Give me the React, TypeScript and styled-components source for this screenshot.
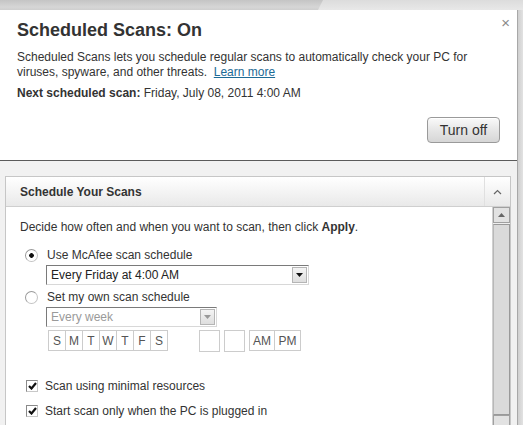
import * as React from 'react';
import styled, { createGlobalStyle } from 'styled-components';

const GlobalStyle = createGlobalStyle`
    html, body {
        margin: 0;
        padding: 0;
        background: #e4e4e4;
    }
    body {
        font-family: 'Liberation Sans', Arial, sans-serif;
        color: #333;
    }
`;

const DAYS = ['S', 'M', 'T', 'W', 'T', 'F', 'S'];

const App = () => {
    const [mode, setMode] = React.useState<'mcafee' | 'own'>('mcafee');
    const [minimal, setMinimal] = React.useState(true);
    const [pluggedIn, setPluggedIn] = React.useState(true);

    return (
        <>
            <GlobalStyle />
            <Page>
                <TopStrip>
                    <TopShade />
                </TopStrip>
                <Body>
                    <Card>
                        <Summary>
                            <Close>×</Close>
                            <Title>Scheduled Scans: On</Title>
                            <Desc>
                                Scheduled Scans lets you schedule regular scans to automatically check your PC for
                                viruses, spyware, and other threats.&nbsp; <LinkText>Learn more</LinkText>
                            </Desc>
                            <NextScan>
                                <b>Next scheduled scan:</b> Friday, July 08, 2011 4:00 AM
                            </NextScan>
                            <ButtonRow>
                                <Button>Turn off</Button>
                            </ButtonRow>
                        </Summary>

                        <Lower>
                            <Panel>
                                <Panel.Header>
                                    <Panel.Title>Schedule Your Scans</Panel.Title>
                                    <Panel.Toggle>
                                        <svg width="9" height="6" viewBox="0 0 9 6">
                                            <path d="M1 5 L4.5 1.5 L8 5" fill="none" stroke="#666" strokeWidth="1.2" />
                                        </svg>
                                    </Panel.Toggle>
                                </Panel.Header>
                                <Panel.Body>
                                    <Content>
                                        <Intro>
                                            Decide how often and when you want to scan, then click <b>Apply</b>.
                                        </Intro>

                                        <OptionRow $top={12} onClick={() => setMode('mcafee')}>
                                            <Radio $checked={mode === 'mcafee'} />
                                            <span>Use McAfee scan schedule</span>
                                        </OptionRow>
                                        <Select $width={263}>
                                            <Select.Value>Every Friday at 4:00 AM</Select.Value>
                                            <Select.Arrow>
                                                <svg width="7" height="4" viewBox="0 0 7 4">
                                                    <path d="M0 0 H7 L3.5 4 Z" fill="#111" />
                                                </svg>
                                            </Select.Arrow>
                                        </Select>

                                        <OptionRow $top={4} onClick={() => setMode('own')}>
                                            <Radio $checked={mode === 'own'} />
                                            <span>Set my own scan schedule</span>
                                        </OptionRow>
                                        <Select $width={171} $disabled>
                                            <Select.Value>Every week</Select.Value>
                                            <Select.Arrow>
                                                <svg width="7" height="4" viewBox="0 0 7 4">
                                                    <path d="M0 0 H7 L3.5 4 Z" fill="#999" />
                                                </svg>
                                            </Select.Arrow>
                                        </Select>

                                        <TimeRow>
                                            <Group>
                                                {DAYS.map((d, i) => (
                                                    <Cell key={i} $width={17}>
                                                        {d}
                                                    </Cell>
                                                ))}
                                            </Group>
                                            <TimeInputs>
                                                <TimeBox />
                                                <TimeBox />
                                            </TimeInputs>
                                            <Group>
                                                <Cell $width={25}>AM</Cell>
                                                <Cell $width={26}>PM</Cell>
                                            </Group>
                                        </TimeRow>

                                        <CheckRow $top={26} onClick={() => setMinimal(!minimal)}>
                                            <CheckBox>{minimal && <CheckMark />}</CheckBox>
                                            <span>Scan using minimal resources</span>
                                        </CheckRow>
                                        <CheckRow $top={9} onClick={() => setPluggedIn(!pluggedIn)}>
                                            <CheckBox>{pluggedIn && <CheckMark />}</CheckBox>
                                            <span>Start scan only when the PC is plugged in</span>
                                        </CheckRow>
                                    </Content>

                                    <Scrollbar>
                                        <Scrollbar.Button>
                                            <svg width="7" height="4" viewBox="0 0 7 4">
                                                <path d="M0 4 H7 L3.5 0 Z" fill="#666" />
                                            </svg>
                                        </Scrollbar.Button>
                                        <Scrollbar.Thumb />
                                        <Scrollbar.Button />
                                    </Scrollbar>
                                </Panel.Body>
                            </Panel>
                        </Lower>
                    </Card>
                    <Gutter />
                </Body>
            </Page>
        </>
    );
};

export default App;

const CheckMark = () => (
    <svg width="9" height="8" viewBox="0 0 9 8">
        <path d="M1 4 L3.5 6.5 L8 1" fill="none" stroke="#111" strokeWidth="2.2" />
    </svg>
);

const Page = styled.div`
    width: 523px;
    height: 425px;
    overflow: hidden;
    display: flex;
    flex-direction: column;
    background: #e4e4e4;
`;

const TopStrip = styled.div`
    height: 10px;
    flex: none;
    background: linear-gradient(to bottom, #dcdcdc, #e8e8e8);
`;

const TopShade = styled.div`
    width: 323px;
    height: 100%;
    background: linear-gradient(to bottom, #c4c4c4, #d6d6d6 70%, #cfcfcf);
    clip-path: polygon(0 0, 100% 0, 318px 100%, 0 100%);
`;

const Body = styled.div`
    flex: 1;
    display: flex;
    min-height: 0;
`;

const Card = styled.div`
    width: 517px;
    flex: none;
    display: flex;
    flex-direction: column;
    background: #fff;
`;

const Gutter = styled.div`
    flex: 1;
    border-left: 1px solid #a8a8a8;
    background: linear-gradient(to right, #cfcfcf, #e2e2e2);
`;

const Summary = styled.div`
    position: relative;
    padding: 8px 17px 17px 17px;
    border-bottom: 1px solid #5a5a5a;
`;

const Close = styled.div`
    position: absolute;
    top: 4px;
    right: 7px;
    font-size: 15px;
    line-height: 18px;
    color: #8a8a8a;
`;

const Title = styled.h1`
    margin: 0;
    font-size: 18px;
    line-height: 24px;
    font-weight: bold;
    color: #333;
`;

const Desc = styled.p`
    margin: 8px 0 0;
    font-size: 12px;
    line-height: 15px;
    color: #333;
`;

const LinkText = styled.a`
    color: #1d6b96;
    text-decoration: underline;
    cursor: pointer;
`;

const NextScan = styled.div`
    margin-top: 6px;
    font-size: 12px;
    line-height: 14px;
    color: #333;

    b {
        font-weight: bold;
    }
`;

const ButtonRow = styled.div`
    display: flex;
    justify-content: flex-end;
    margin-top: 17px;
`;

const Button = styled.button`
    width: 73px;
    height: 26px;
    padding: 0;
    border: 1px solid #9a9a9a;
    border-radius: 4px;
    background: linear-gradient(to bottom, #fafafa, #e6e6e6 50%, #d6d6d6);
    box-shadow: inset 0 1px 0 #fff;
    font-family: 'Liberation Sans', Arial, sans-serif;
    font-size: 14px;
    color: #333;
`;

const Lower = styled.div`
    flex: 1;
    background: #f1f1f1;
    padding: 15px 6px 0 5px;
    min-height: 0;
`;

const Panel = Object.assign(
    styled.div`
        border: 1px solid #c6c6c6;
        border-bottom: none;
        background: #fff;
    `,
    {
        Header: styled.div`
            display: flex;
            align-items: stretch;
            height: 29px;
            border-bottom: 1px solid #cfcfcf;
            background: linear-gradient(to bottom, #ffffff, #f2f2f2 60%, #e9e9e9);
        `,
        Title: styled.div`
            flex: 1;
            display: flex;
            align-items: center;
            padding-left: 14px;
            font-size: 12px;
            font-weight: bold;
            color: #333;
        `,
        Toggle: styled.div`
            width: 25px;
            display: flex;
            align-items: center;
            justify-content: center;
            border-left: 1px solid #e0e0e0;
        `,
        Body: styled.div`
            display: flex;
            height: 240px;
        `,
    },
);

const Content = styled.div`
    flex: 1;
    padding: 12px 0 0 14px;
    font-size: 12px;
    line-height: 16px;
    color: #333;
`;

const Intro = styled.div`
    b {
        font-weight: bold;
    }
`;

const OptionRow = styled.div<{ $top: number }>`
    display: flex;
    align-items: center;
    gap: 9px;
    margin-top: ${(p) => p.$top}px;
    padding-left: 5px;
    height: 16px;
    cursor: default;
`;

const Radio = styled.span<{ $checked: boolean }>`
    width: 11px;
    height: 11px;
    flex: none;
    border-radius: 50%;
    border: 1px solid #c4c4c4;
    border-top-color: #9a9a9a;
    border-left-color: #9a9a9a;
    background: ${(p) =>
        p.$checked
            ? 'radial-gradient(circle, #111 0 2px, #fff 2.6px)'
            : 'radial-gradient(circle, #fff 0 60%, #f0f0f0)'};
`;

const Select = Object.assign(
    styled.div<{ $width: number; $disabled?: boolean }>`
        display: flex;
        width: ${(p) => p.$width}px;
        height: 20px;
        box-sizing: border-box;
        margin: 2px 0 0 26px;
        border: 1px solid #d8d8d8;
        border-top-color: #7a7a7a;
        border-left-color: #7a7a7a;
        background: #fff;
        color: ${(p) => (p.$disabled ? '#9a9a9a' : '#222')};
    `,
    {
        Value: styled.div`
            flex: 1;
            display: flex;
            align-items: center;
            padding-left: 4px;
            font-size: 12px;
        `,
        Arrow: styled.div`
            width: 15px;
            margin: 1px;
            display: flex;
            align-items: center;
            justify-content: center;
            background: linear-gradient(to bottom, #f4f4f4, #dedede);
            border: 1px solid #b5b5b5;
            box-sizing: border-box;
        `,
    },
);

const TimeRow = styled.div`
    display: flex;
    align-items: flex-start;
    margin: 3px 0 0 28px;
`;

const Group = styled.div`
    display: flex;
    border: 1px solid #cccccc;
    border-right: none;
`;

const Cell = styled.div<{ $width: number }>`
    width: ${(p) => p.$width}px;
    height: 19px;
    box-sizing: border-box;
    display: flex;
    align-items: center;
    justify-content: center;
    border-right: 1px solid #cccccc;
    font-size: 12px;
    color: #555;
`;

const TimeInputs = styled.div`
    display: flex;
    gap: 4px;
    margin: 0 4px 0 31px;
`;

const TimeBox = styled.div`
    width: 21px;
    height: 22px;
    box-sizing: border-box;
    border: 1px solid #cccccc;
`;

const CheckRow = styled.div<{ $top: number }>`
    display: flex;
    align-items: center;
    gap: 7px;
    margin-top: ${(p) => p.$top}px;
    padding-left: 6px;
    height: 16px;
    cursor: default;
`;

const CheckBox = styled.span`
    width: 12px;
    height: 12px;
    flex: none;
    box-sizing: border-box;
    display: flex;
    align-items: center;
    justify-content: center;
    border: 1px solid #c8c8c8;
    border-top-color: #8a8a8a;
    border-left-color: #8a8a8a;
    background: #fff;
`;

const Scrollbar = Object.assign(
    styled.div`
        width: 17px;
        flex: none;
        display: flex;
        flex-direction: column;
        background: #efefef;
        border-left: 1px solid #d0d0d0;
    `,
    {
        Button: styled.div`
            height: 16px;
            flex: none;
            display: flex;
            align-items: center;
            justify-content: center;
            box-sizing: border-box;
            border: 1px solid #a0a0a0;
            background: #e2e2e2;
        `,
        Thumb: styled.div`
            height: 191px;
            flex: none;
            margin-top: 1px;
            box-sizing: border-box;
            border: 1px solid #999;
            border-left-color: #b8b8b8;
            background: #dadada;
        `,
    },
);
